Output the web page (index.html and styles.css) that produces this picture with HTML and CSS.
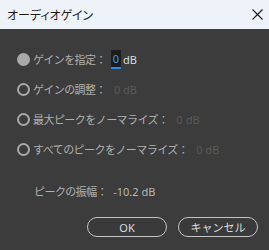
FILE: index.html
```html
<!DOCTYPE html>
<html lang="ja">
<head>
<meta charset="utf-8">
<link rel="stylesheet" href="styles.css">
</head>
<body>
<div class="dialog">
  <div class="titlebar">
    <span class="title">オーディオゲイン</span>
    <svg class="close" width="11" height="11" viewBox="0 0 11 11"><path d="M0.5 0.5L10.5 10.5M10.5 0.5L0.5 10.5" stroke="#1a1a1a" stroke-width="1.1" fill="none"/></svg>
  </div>
  <div class="content">
    <div class="row">
      <span class="radio checked"></span>
      <span class="label">ゲインを指定：</span>
      <span class="input"><span class="input-val">0</span></span>
      <span class="unit">dB</span>
    </div>
    <div class="row">
      <span class="radio"></span>
      <span class="label">ゲインの調整：</span>
      <span class="value">0 dB</span>
    </div>
    <div class="row">
      <span class="radio"></span>
      <span class="label">最大ピークをノーマライズ：</span>
      <span class="value">0 dB</span>
    </div>
    <div class="row">
      <span class="radio"></span>
      <span class="label">すべてのピークをノーマライズ：</span>
      <span class="value">0 dB</span>
    </div>
    <div class="peak">
      <span class="label">ピークの振幅：</span>
      <span class="peak-val">-10.2 dB</span>
    </div>
    <div class="buttons">
      <button class="btn">OK</button>
      <button class="btn">キャンセル</button>
    </div>
  </div>
</div>
</body>
</html>
```
FILE: styles.css
```css
html, body {
  margin: 0;
  padding: 0;
  background: #3c3c3c;
}
.dialog {
  width: 269px;
  height: 250px;
  overflow: hidden;
  font-family: "Noto Sans", "Noto Sans CJK JP", sans-serif;
}
.titlebar {
  height: 29px;
  background: #eef3f9;
  display: flex;
  align-items: center;
  justify-content: space-between;
  padding: 0 6px 0 7px;
}
.title {
  font-family: "Noto Sans CJK JP", sans-serif;
  font-size: 12px;
  color: #1a1a1a;
  font-feature-settings: "palt";
}
.close {
  display: block;
}
.content {
  padding: 15px 0 0 17px;
}
.row {
  height: 30px;
  display: flex;
  align-items: center;
}
.radio {
  width: 13px;
  height: 13px;
  box-sizing: border-box;
  border: 2px solid #a9a9a9;
  border-radius: 50%;
  margin-right: 3px;
  flex: none;
}
.radio.checked {
  background: #a9a9a9;
}
.label {
  font-size: 11px;
  color: #b0b0b0;
  letter-spacing: -0.55px;
  font-family: "Noto Sans CJK JP", sans-serif;
}
.value {
  font-size: 11px;
  color: #5a5a5a;
  margin-left: 8px;
}
.input {
  width: 10px;
  height: 17px;
  background: #1c1c1c;
  border-bottom: 2px solid #2b8be8;
  margin-left: 5px;
  display: flex;
  align-items: center;
  justify-content: center;
}
.input-val {
  font-size: 11px;
  color: #3d9cf2;
}
.unit {
  font-size: 11px;
  color: #dcdcdc;
  margin-left: 2px;
}
.peak {
  height: 30px;
  margin-top: 12px;
  padding-left: 17px;
  display: flex;
  align-items: center;
}
.peak-val {
  font-size: 11px;
  color: #b8b8b8;
  margin-left: 6px;
}
.buttons {
  margin-top: 11px;
  display: flex;
  justify-content: flex-end;
  gap: 11px;
  padding-right: 11px;
}
.btn {
  width: 80px;
  height: 20px;
  box-sizing: border-box;
  border: 1.5px solid #c4c4c4;
  border-radius: 10px;
  background: #3a3a3a;
  color: #dcdcdc;
  font-family: "Noto Sans", "Noto Sans CJK JP", sans-serif;
  font-size: 11px;
  padding: 0;
  line-height: 1;
}
```
